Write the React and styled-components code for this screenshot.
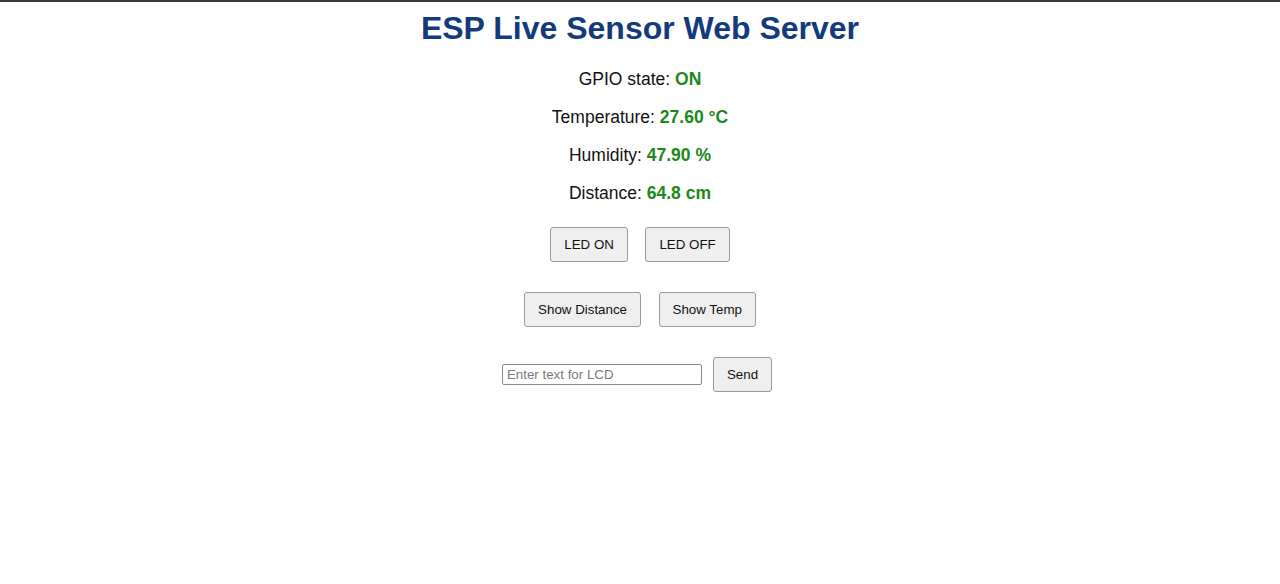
import React from "react";
import styled, { createGlobalStyle } from "styled-components";

const GlobalStyle = createGlobalStyle`
  html, body { margin: 0; padding: 0; background: #ffffff; }
  body { font-family: "Liberation Sans", Arial, sans-serif; }
`;

const Page = styled.div`
  border-top: 2px solid #3b3b3b;
  display: flex;
  flex-direction: column;
  align-items: center;
  min-height: 582px;
  box-sizing: border-box;
`;

const Title = styled.h1`
  margin: 8px 0 0;
  font-size: 32px;
  line-height: 37px;
  font-weight: 700;
  color: #133b7c;
`;

const Readings = styled.div`
  margin-top: 21.5px;
  display: flex;
  flex-direction: column;
  align-items: center;
  gap: 17.3px;
`;

const Reading = styled.p`
  margin: 0;
  font-size: 17.5px;
  line-height: 21px;
  color: #111111;
`;

const Value = styled.span`
  font-weight: 700;
  color: #1a881a;
`;

const Row = styled.div`
  display: flex;
  align-items: center;
  justify-content: center;
  gap: ${(p) => p.$gap || "17.5px"};
  margin-top: ${(p) => p.$top || "30px"};
  padding-right: ${(p) => p.$shift || "0"};
`;

const Button = styled.button`
  font-family: "Liberation Sans", Arial, sans-serif;
  font-size: 13.333px;
  line-height: 15px;
  padding: 9px 13px;
  color: #111111;
  background: #efefef;
  border: 1px solid #9a9a9a;
  border-radius: 3px;
  cursor: pointer;
`;

const TextInput = styled.input`
  box-sizing: border-box;
  width: 200px;
  height: 21px;
  padding: 1px 4px;
  font-family: "Liberation Sans", Arial, sans-serif;
  font-size: 13.333px;
  color: #111111;
  border: 1px solid #8a8a8a;
  border-radius: 2px;
  background: #ffffff;
  &::placeholder { color: #7a7a7a; }
`;

export default function App() {
  return (
    <>
      <GlobalStyle />
      <Page>
        <Title>ESP Live Sensor Web Server</Title>
        <Readings>
          <Reading>GPIO state: <Value>ON</Value></Reading>
          <Reading>Temperature: <Value>27.60 °C</Value></Reading>
          <Reading>Humidity: <Value>47.90 %</Value></Reading>
          <Reading>Distance: <Value>64.8 cm</Value></Reading>
        </Readings>
        <Row $top="22.5px">
          <Button>LED ON</Button>
          <Button>LED OFF</Button>
        </Row>
        <Row>
          <Button>Show Distance</Button>
          <Button>Show Temp</Button>
        </Row>
        <Row $gap="11px" $shift="6px">
          <TextInput type="text" placeholder="Enter text for LCD" />
          <Button>Send</Button>
        </Row>
      </Page>
    </>
  );
}
